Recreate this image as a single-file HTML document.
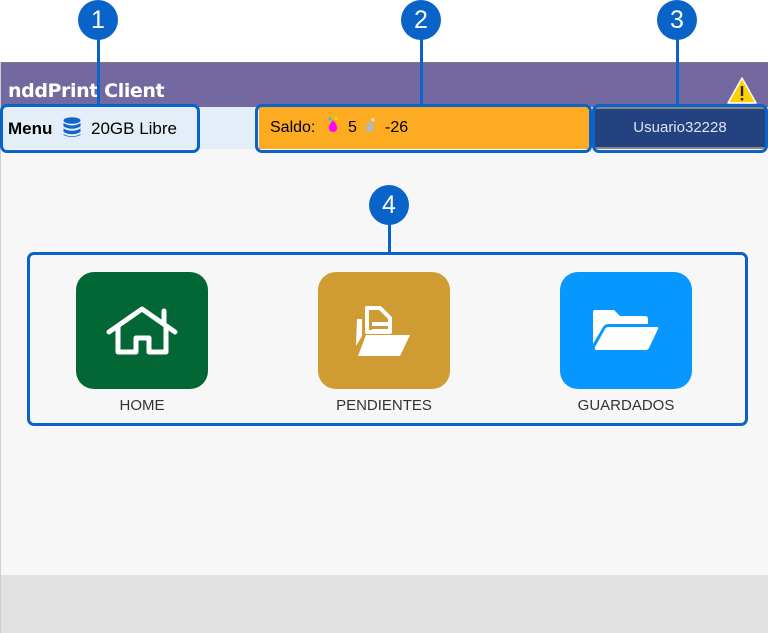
<!DOCTYPE html>
<html><head><meta charset="utf-8"><style>
*{margin:0;padding:0;box-sizing:border-box}
body{width:768px;height:633px;position:relative;overflow:hidden;background:#fff;font-family:"Liberation Sans",sans-serif}
.abs{position:absolute}
.circ{position:absolute;width:40px;height:40px;border-radius:50%;background:#0a63c9;color:#fff;font-size:25px;text-align:center;line-height:40px}
.line{position:absolute;width:3px;background:#0a63c9}
.box{position:absolute;border:3px solid #0a63c9;border-radius:7px}
.tile{position:absolute;top:272px;width:132px;height:117px;border-radius:18px}
.lbl{position:absolute;top:397px;width:200px;text-align:center;font-size:15px;color:#333}
</style></head><body>
<div class="abs" style="left:0;top:62px;width:768px;height:2px;background:#7a7a7a"></div>
<div class="abs" style="left:0;top:63px;width:768px;height:44px;background:#7468a0"></div>
<div class="abs" style="left:8px;top:80px;color:#fff;font-family:'DejaVu Sans',sans-serif;font-weight:bold;font-size:19px;letter-spacing:-0.4px">nddPrint Client</div>
<svg class="abs" style="left:727px;top:77px" width="30" height="27" viewBox="0 0 30 27"><path d="M15 1 L29 26 H1 Z" fill="#ffd000" stroke="#fff" stroke-width="1.5" stroke-linejoin="round"/><rect x="13.8" y="9" width="2.4" height="10" fill="#222"/><rect x="13.8" y="21" width="2.4" height="2.4" fill="#222"/></svg>
<div class="abs" style="left:0;top:107px;width:768px;height:42px;background:#f7f7f7"></div>
<div class="abs" style="left:0;top:107px;width:259px;height:42px;background:#e4eef8"></div>
<div class="abs" style="left:259px;top:107px;width:330px;height:42px;background:#fdab21"></div>
<div class="abs" style="left:595px;top:107px;width:170px;height:42px;background:#24427f;border-top:2px solid #888;border-bottom:2px solid #888"></div>
<div class="abs" style="left:8px;top:119px;font-size:17px;font-weight:bold">Menu</div>
<svg class="abs" style="left:63px;top:117px" width="18" height="21" viewBox="0 0 18 21"><ellipse cx="9" cy="3.5" rx="8.5" ry="3.3" fill="#1565c9"/><path d="M0.5 6 Q9 11 17.5 6 V9.5 Q9 14 0.5 9.5Z" fill="#1565c9"/><path d="M0.5 11.5 Q9 16 17.5 11.5 V15 Q9 19.5 0.5 15Z" fill="#1565c9"/><path d="M0.5 17 Q9 21.5 17.5 17 V18 Q9 22 0.5 18Z" fill="#1565c9"/></svg>
<div class="abs" style="left:91px;top:119px;font-size:17px">20GB Libre</div>
<div class="abs" style="left:270px;top:119px;font-size:16px">Saldo:</div>
<svg class="abs" style="left:326px;top:116px" width="14" height="18" viewBox="0 0 14 18"><path d="M7 4 Q12 10 11 13 A4.2 4.2 0 0 1 3 13 Q2 10 7 4Z" fill="#f0f"/><circle cx="4" cy="3" r="1.6" fill="#2cc6e6"/><circle cx="10" cy="3" r="1.6" fill="#ffe100"/></svg>
<div class="abs" style="left:348px;top:119px;font-size:16px">5</div>
<svg class="abs" style="left:363px;top:116px" width="14" height="18" viewBox="0 0 14 18"><path d="M7 5 Q12 10 11 13 A4.2 4.2 0 0 1 3 13 Q2 10 7 5Z" fill="#b8b8b8"/><circle cx="10" cy="3.5" r="1.8" fill="#ddd"/></svg>
<div class="abs" style="left:385px;top:119px;font-size:16px">-26</div>
<div class="abs" style="left:595px;top:119px;width:170px;text-align:center;font-size:15px;color:#dde3ef">Usuario32228</div>
<div class="abs" style="left:0;top:149px;width:768px;height:426px;background:#f7f7f7"></div>
<div class="abs" style="left:0;top:575px;width:768px;height:58px;background:#e1e1e1"></div>
<div class="abs" style="left:0;top:62px;width:1px;height:571px;background:#cfcfcf"></div>

<div class="tile" style="left:76px;background:#036635"></div>
<svg class="abs" style="left:106px;top:306px" width="72" height="50" viewBox="0 0 72 50"><path d="M3 26 L36 3 L69 26 M58 18 V5 M12 20 V46 H30 V32 H43 V46 H60 V20" fill="none" stroke="#fff" stroke-width="5" stroke-linejoin="round" stroke-linecap="round"/></svg>
<div class="lbl" style="left:42px">HOME</div>
<div class="tile" style="left:318px;background:#cf9c33"></div>
<svg class="abs" style="left:354px;top:304px" width="60" height="54" viewBox="0 0 60 54"><path d="M13 4 H26 L36 14 V28 H13 Z" fill="none" stroke="#fff" stroke-width="4" stroke-linejoin="round"/><rect x="18" y="18" width="16" height="4" fill="#fff"/><rect x="18" y="25" width="16" height="3" fill="#fff"/><path d="M3 15 H8 V32 L2 42 Z" fill="#fff"/><path d="M12 31 H56 L46 52 H4 Z" fill="#fff"/></svg>
<div class="lbl" style="left:284px">PENDIENTES</div>
<div class="tile" style="left:560px;background:#0797ff"></div>
<svg class="abs" style="left:592px;top:310px" width="68" height="42" viewBox="0 0 68 42"><path d="M1 2 Q1 0 3 0 H22 L28 6 H53 Q56 6 56 9 V14 H16 Q13 14 11 17 L1 34 Z" fill="#fff"/><path d="M17 17 H65 Q67 17 66 19 L57 38 Q56 40 54 40 H5 Q2 40 3 37 L13 19 Q14 17 17 17Z" fill="#fff"/></svg>
<div class="lbl" style="left:526px">GUARDADOS</div>

<div class="box" style="left:0;top:104px;width:200px;height:49px"></div>
<div class="box" style="left:255px;top:104px;width:337px;height:49px"></div>
<div class="box" style="left:592px;top:104px;width:176px;height:49px"></div>
<div class="box" style="left:27px;top:252px;width:721px;height:174px"></div>
<div class="line" style="left:97px;top:37px;height:68px"></div>
<div class="line" style="left:420px;top:37px;height:68px"></div>
<div class="line" style="left:676px;top:37px;height:68px"></div>
<div class="line" style="left:388px;top:222px;height:31px"></div>
<div class="circ" style="left:78px;top:0">1</div>
<div class="circ" style="left:401px;top:0">2</div>
<div class="circ" style="left:657px;top:0">3</div>
<div class="circ" style="left:369px;top:185px">4</div>
</body></html>
